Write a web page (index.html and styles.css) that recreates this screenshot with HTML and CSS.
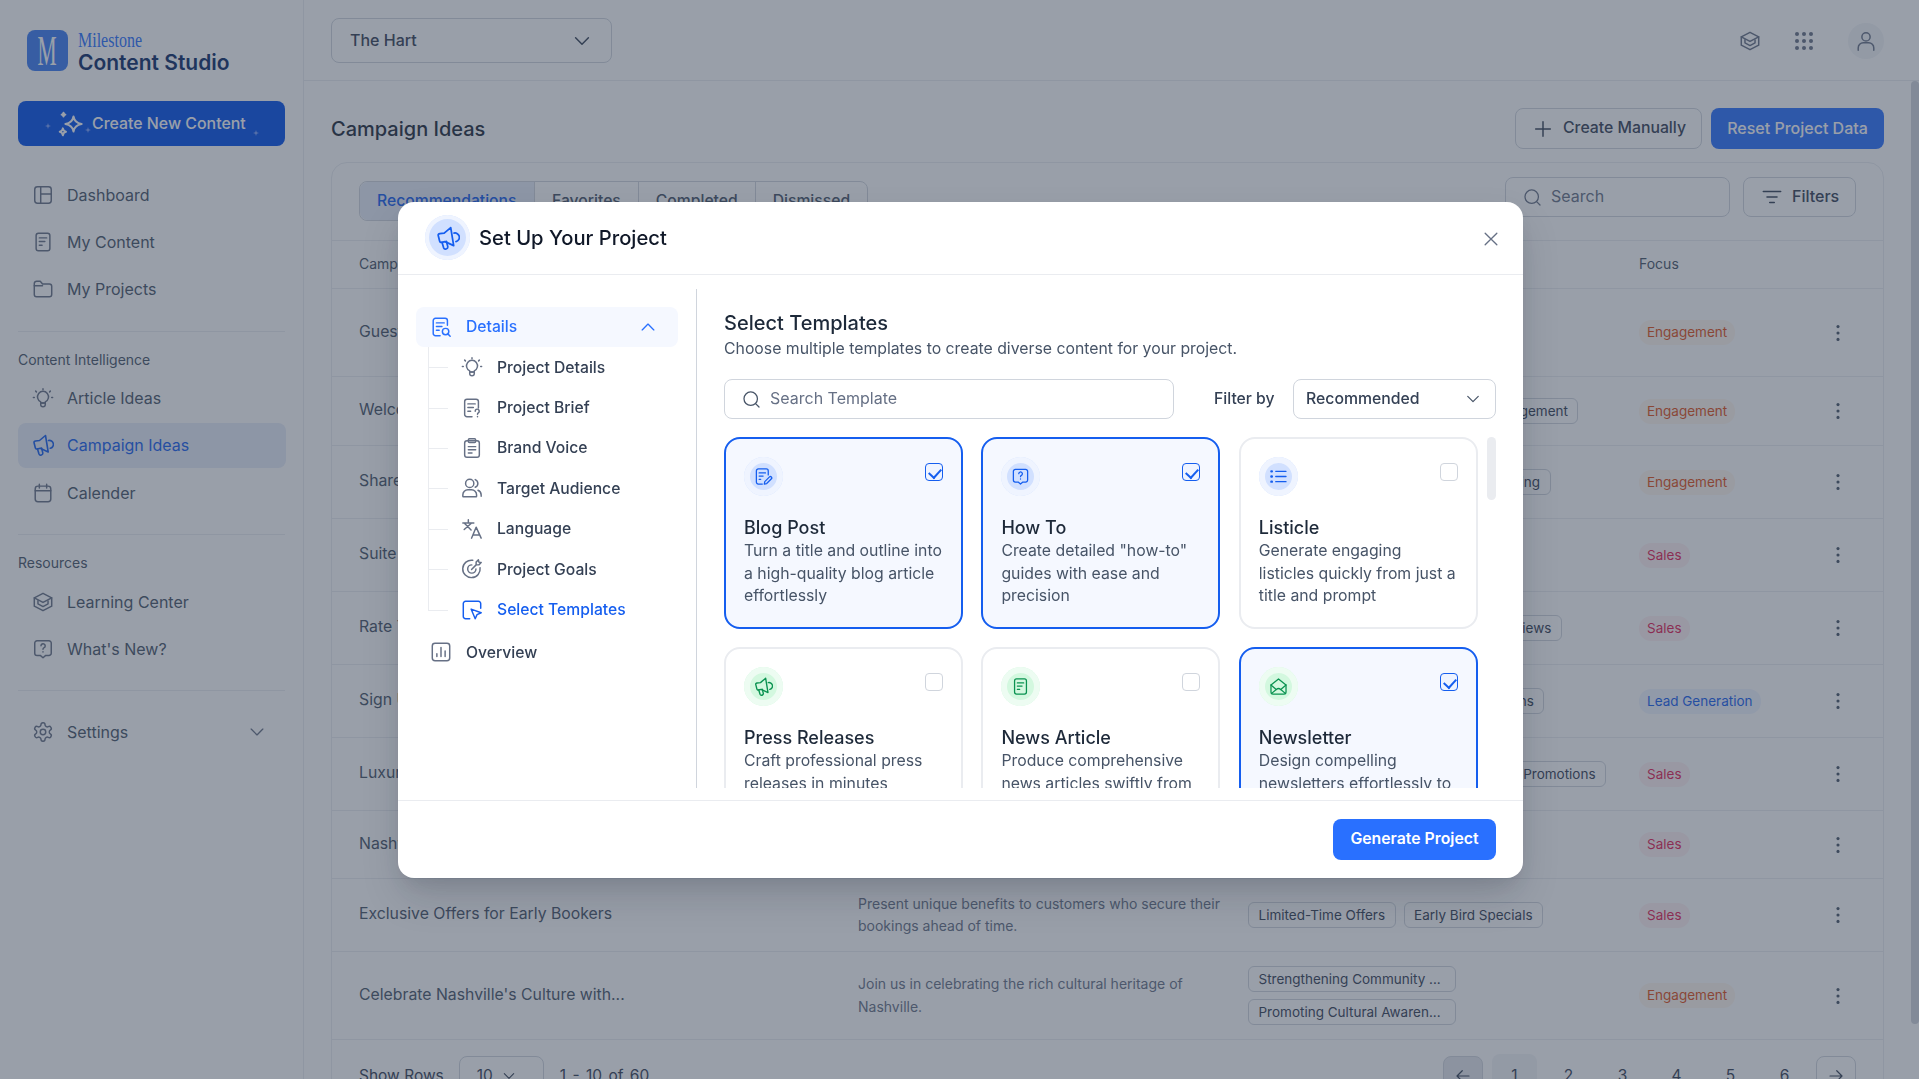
FILE: index.html
```html
<!DOCTYPE html>
<html lang="en">
<head>
    <meta charset="UTF-8">
    <title>Campaign Ideas</title>
    <link rel="stylesheet" href="styles.css">
</head>
<body>
    <svg class="sprite" xmlns="http://www.w3.org/2000/svg">
        <symbol id="i-dash" viewBox="0 0 24 24"><rect x="3" y="3" width="18" height="18" rx="3"/><path d="M9.5 3v18M9.5 11H21"/></symbol>
        <symbol id="i-doc" viewBox="0 0 24 24"><rect x="4.5" y="2.5" width="15" height="19" rx="2.5"/><path d="M8 7.5h8M8 11.5h6M8 15.5h3"/></symbol>
        <symbol id="i-folder" viewBox="0 0 24 24"><path d="M2.5 6A2.5 2.5 0 0 1 5 3.5h4l2.5 3H19A2.5 2.5 0 0 1 21.5 9v9a2.5 2.5 0 0 1-2.5 2.5H5A2.5 2.5 0 0 1 2.5 18Z"/><path d="M2.5 8.500h9"/></symbol>
        <symbol id="i-bulb" viewBox="0 0 24 24"><path d="M9.5 17.5v-1.300A6 6 0 1 1 14.5 16.200v1.300Z"/><path d="M9.5 17.5h5V19a2.5 2.5 0 0 1-5 0Z"/><path d="M12 2v1M4 4.500l.8.8M20 4.500l-.8.8M1.500 11.500h1M21.500 11.500h1"/></symbol>
        <symbol id="i-mega" viewBox="1 1 21 22"><path d="M2.500 9.500 3.800 14.800c.2.900 1 1.400 1.900 1.200l3-.7 8 3.700L14 2.500 8 7.500 4 8c-1 .2-1.700.8-1.500 1.500Z"/><path d="m6 16 1.500 5a2 2 0 0 0 3.800-1.100L10 15"/><path d="M17 7.500a4 4 0 0 1 1.800 7.800"/></symbol>
        <symbol id="i-cal" viewBox="0 0 24 24"><rect x="3.500" y="4.500" width="17" height="17" rx="3"/><path d="M3.500 9.500h17M8 2.500v4M16 2.500v4"/></symbol>
        <symbol id="i-hat" viewBox="0 0 24 24"><path d="M12 2.500 21.500 7.500v9L12 21.500 2.500 16.500v-9Z"/><path d="M2.500 7.500 12 12.500l9.500-5"/><path d="M6.500 10.500v3.500l5.500 3 5.500-3v-3"/></symbol>
        <symbol id="i-help" viewBox="0 0 24 24"><path d="M5.500 3h13A2.500 2.500 0 0 1 21 5.500v11a2.500 2.500 0 0 1-2.500 2.500H15l-3 2.500L9 19H5.500A2.500 2.500 0 0 1 3 16.500v-11A2.500 2.500 0 0 1 5.500 3Z"/><path d="M9.800 8.500a2.300 2.300 0 1 1 3.400 2.100c-.8.400-1.200.9-1.200 1.700M12 15v.2"/></symbol>
        <symbol id="i-gear" viewBox="0 0 24 24"><path d="M12.220 2h-.44a2 2 0 0 0-2 2v.18a2 2 0 0 1-1 1.730l-.43.25a2 2 0 0 1-2 0l-.15-.08a2 2 0 0 0-2.730.73l-.22.38a2 2 0 0 0 .73 2.730l.15.1a2 2 0 0 1 1 1.720v.51a2 2 0 0 1-1 1.740l-.15.09a2 2 0 0 0-.73 2.730l.22.38a2 2 0 0 0 2.730.73l.15-.08a2 2 0 0 1 2 0l.43.25a2 2 0 0 1 1 1.730V20a2 2 0 0 0 2 2h.44a2 2 0 0 0 2-2v-.18a2 2 0 0 1 1-1.730l.43-.25a2 2 0 0 1 2 0l.15.08a2 2 0 0 0 2.730-.73l.22-.39a2 2 0 0 0-.73-2.730l-.15-.08a2 2 0 0 1-1-1.740v-.5a2 2 0 0 1 1-1.740l.15-.09a2 2 0 0 0 .73-2.730l-.22-.38a2 2 0 0 0-2.730-.73l-.15.08a2 2 0 0 1-2 0l-.43-.25a2 2 0 0 1-1-1.730V4a2 2 0 0 0-2-2z"/><circle cx="12" cy="12" r="3"/></symbol>
        <symbol id="i-chev" viewBox="0 0 24 24"><path d="m5 8.500 7 7 7-7"/></symbol>
        <symbol id="i-search" viewBox="0 0 24 24"><circle cx="11" cy="11" r="8.500"/><path d="m17.500 17.500 4 4"/></symbol>
        <symbol id="i-filter" viewBox="0 0 24 24"><path d="M2.500 6h19M6.500 12h11M9.500 18h5"/></symbol>
        <symbol id="i-plus" viewBox="0 0 24 24"><path d="M12 4v16M4 12h16"/></symbol>
        <symbol id="i-x" viewBox="0 0 24 24"><path d="M5 5l14 14M19 5 5 19"/></symbol>
        <symbol id="i-user" viewBox="0 0 24 24"><circle cx="12" cy="7.500" r="4.500"/><path d="M3.500 22v-2.500A5.500 5.500 0 0 1 9 14h6a5.500 5.500 0 0 1 5.500 5.500V22"/></symbol>
        <symbol id="i-more" viewBox="0 0 24 24"><circle cx="12" cy="5" r="1.700"/><circle cx="12" cy="12" r="1.700"/><circle cx="12" cy="19" r="1.700"/></symbol>
        <symbol id="i-left" viewBox="0 0 24 24"><path d="M20 12H4M11 5l-7 7 7 7"/></symbol>
        <symbol id="i-right" viewBox="0 0 24 24"><path d="M4 12h16M13 5l7 7-7 7"/></symbol>
        <symbol id="i-spark" viewBox="0 0 24 24"><path d="M14 6c.6 3.500 2.500 5.400 6.500 6-4 .6-5.900 2.500-6.500 6-.6-3.500-2.500-5.400-6.500-6 4-.6 5.900-2.500 6.500-6Z"/><path d="M5.500 15.500c.3 1.700 1 2.400 2.500 2.700-1.500.3-2.200 1-2.500 2.800-.3-1.800-1-2.500-2.500-2.800 1.500-.3 2.200-1 2.500-2.700ZM6 3c.2 1 .6 1.400 1.500 1.500C6.600 4.700 6.200 5.100 6 6c-.2-.9-.6-1.300-1.500-1.500C5.400 4.400 5.800 4 6 3Z"/></symbol>
        <symbol id="i-docsearch" viewBox="0 0 24 24"><path d="M19 10V5a2.500 2.500 0 0 0-2.500-2.500H6A2.500 2.500 0 0 0 3.500 5v14A2.500 2.500 0 0 0 6 21.500h5"/><path d="M7 7.500h8.500M7 11.500h6M7 15.500h3"/><circle cx="17" cy="17" r="3.500"/><path d="m19.500 19.500 2.500 2.500"/></symbol>
        <symbol id="i-docask" viewBox="0 0 24 24"><path d="M12 21.500H6.500A2.500 2.500 0 0 1 4 19V5a2.500 2.500 0 0 1 2.500-2.500h10A2.500 2.500 0 0 1 19 5v7"/><path d="M7.500 7.500h8M7.500 11.500h6M7.500 15.500h3"/><path d="M15.500 15.500a2.200 2.200 0 1 1 3.400 1.800c-.6.400-.9.800-.9 1.400M18 21.300v.2"/></symbol>
        <symbol id="i-clip" viewBox="0 0 24 24"><rect x="4" y="4" width="16" height="18" rx="2.500"/><rect x="8" y="2" width="8" height="4" rx="1.200"/><path d="M8 10.500h8M8 14h8M8 17.500h4"/></symbol>
        <symbol id="i-users" viewBox="0 0 24 24"><circle cx="9.500" cy="7" r="4.500"/><path d="M2 21v-1.500A5.500 5.500 0 0 1 7.500 14h4a5.500 5.500 0 0 1 5.500 5.500V21a.5.500 0 0 1-.5.5h-14A.5.500 0 0 1 2 21Z"/><path d="M15.500 2.800a4.500 4.500 0 0 1 0 8.400M18.500 14.500A5.500 5.500 0 0 1 22 19.500V21"/></symbol>
        <symbol id="i-lang" viewBox="0 0 24 24"><path d="M2 5.500h12M8 2v3.500M3.500 12.500 11 6M4 6l7 7"/><path d="M11.500 22 16.500 10l5.500 12M13 18.500h7.500"/></symbol>
        <symbol id="i-goal" viewBox="0 0 24 24"><path d="M20.800 10.500a9.500 9.500 0 1 1-8-8"/><path d="M16.300 12a4.500 4.500 0 1 1-4.500-4.500"/><path d="m11.500 12.500 5-5M16.500 7.500V4.500L19 2l.5 2.500L22 5l-2.500 2.500Z"/></symbol>
        <symbol id="i-pick" viewBox="0 0 24 24"><path d="M9.500 21.500H5A2.500 2.500 0 0 1 2.500 19V5A2.500 2.500 0 0 1 5 2.500h14A2.500 2.500 0 0 1 21.500 5v5"/><path d="M11 11l11 4-4.500 2-2 4.500Z"/></symbol>
        <symbol id="i-chart" viewBox="0 0 24 24"><rect x="2.500" y="2.500" width="19" height="19" rx="3"/><path d="M7.500 17v-3M12 17V7M16.500 17v-6"/></symbol>
        <symbol id="i-docedit" viewBox="0 0 24 24"><path d="M10.500 21.500h-5A2.500 2.500 0 0 1 3 19V5a2.500 2.500 0 0 1 2.500-2.500h10A2.500 2.500 0 0 1 18 5v5"/><path d="M6.500 7.500h8M6.500 11.500h5M6.500 15.500h2"/><path d="m13 21.500.6-3 6-6a1.700 1.700 0 0 1 2.400 2.400l-6 6Z"/></symbol>
        <symbol id="i-list" viewBox="0 0 24 24"><path d="M8.500 5.500h13M8.500 12h13M8.500 18.500h13"/><path class="thick" d="M3 5.500h.6M3 12h.6M3 18.500h.6"/></symbol>
        <symbol id="i-mail" viewBox="0 0 24 24"><path d="M2.500 10v9A2.500 2.500 0 0 0 5 21.500h14a2.500 2.500 0 0 0 2.500-2.500v-9L12 2.500Z"/><path d="m2.500 10 7 6M21.500 10l-7 6M3 21l6.500-5.500a4 4 0 0 1 5 0L21 21"/></symbol>
    </svg>

    <div class="app">
        <aside class="sidebar">
            <div class="brand">
                <div class="brand-mark"><span>M</span></div>
                <div class="brand-text">
                    <div class="brand-top">Milestone</div>
                    <div class="brand-name">Content Studio</div>
                </div>
            </div>
            <div class="create-btn">
                <i class="spark-dot spark-a"></i><i class="spark-dot spark-b"></i><i class="spark-dot spark-c"></i>
                <svg class="icon spark-icon"><use href="#i-spark"/></svg>
                <span>Create New Content</span>
            </div>
            <nav class="nav-group first">
                <a class="nav-item"><svg class="icon"><use href="#i-dash"/></svg>Dashboard</a>
                <a class="nav-item"><svg class="icon"><use href="#i-doc"/></svg>My Content</a>
                <a class="nav-item"><svg class="icon"><use href="#i-folder"/></svg>My Projects</a>
            </nav>
            <div class="side-rule"></div>
            <div class="nav-label">Content Intelligence</div>
            <nav class="nav-group">
                <a class="nav-item"><svg class="icon"><use href="#i-bulb"/></svg>Article Ideas</a>
                <a class="nav-item active"><svg class="icon"><use href="#i-mega"/></svg>Campaign Ideas</a>
                <a class="nav-item"><svg class="icon"><use href="#i-cal"/></svg>Calender</a>
            </nav>
            <div class="side-rule"></div>
            <div class="nav-label">Resources</div>
            <nav class="nav-group">
                <a class="nav-item"><svg class="icon"><use href="#i-hat"/></svg>Learning Center</a>
                <a class="nav-item"><svg class="icon"><use href="#i-help"/></svg>What's New?</a>
            </nav>
            <div class="side-rule"></div>
            <nav class="nav-group settings">
                <a class="nav-item"><svg class="icon"><use href="#i-gear"/></svg>Settings<svg class="icon chev"><use href="#i-chev"/></svg></a>
            </nav>
        </aside>

        <div class="main">
            <header class="topbar">
                <div class="project-select"><span>The Hart</span><svg class="icon"><use href="#i-chev"/></svg></div>
                <div class="top-icons">
                    <svg class="icon"><use href="#i-hat"/></svg>
                    <div class="apps"><i></i><i></i><i></i><i></i><i></i><i></i><i></i><i></i><i></i></div>
                    <div class="avatar"><svg class="icon"><use href="#i-user"/></svg></div>
                </div>
            </header>
            <div class="page-wrap">
                <div class="page">
                    <div class="page-head">
                        <h1>Campaign Ideas</h1>
                        <div class="btn outline"><svg class="icon"><use href="#i-plus"/></svg><span>Create Manually</span></div>
                        <div class="btn solid"><span>Reset Project Data</span></div>
                    </div>
                    <div class="panel">
                        <div class="panel-bar">
                            <div class="tabs">
                                <div class="tab current">Recommendations</div>
                                <div class="tab">Favorites</div>
                                <div class="tab">Completed</div>
                                <div class="tab">Dismissed</div>
                            </div>
                            <div class="panel-search"><svg class="icon"><use href="#i-search"/></svg><span>Search</span></div>
                            <div class="panel-filter"><svg class="icon"><use href="#i-filter"/></svg><span>Filters</span></div>
                        </div>
                        <div class="trow thead h48">
                            <div>Campaign</div><div>Description</div><div>Tags</div><div>Focus</div><div></div>
                        </div>
                        <div class="trow h88">
                            <div class="t-name">Guest Appreciation Week</div>
                            <div class="t-desc"></div>
                            <div class="t-tags"><span class="tag">Guest Loyalty</span></div>
                            <div><span class="pill orange">Engagement</span></div>
                            <svg class="icon more"><use href="#i-more"/></svg>
                        </div>
                        <div class="trow h69">
                            <div class="t-name">Welcome Back Offer</div>
                            <div class="t-desc"></div>
                            <div class="t-tags"><span class="tag">Personalized Service</span><span class="tag">Customer Engagement</span></div>
                            <div><span class="pill orange">Engagement</span></div>
                            <svg class="icon more"><use href="#i-more"/></svg>
                        </div>
                        <div class="trow h73">
                            <div class="t-name">Share Your Story</div>
                            <div class="t-desc"></div>
                            <div class="t-tags"><span class="tag">User Created Content</span><span class="tag">Guest Storytelling</span></div>
                            <div><span class="pill orange">Engagement</span></div>
                            <svg class="icon more"><use href="#i-more"/></svg>
                        </div>
                        <div class="trow h73">
                            <div class="t-name">Suite Upgrade Offers</div>
                            <div class="t-desc"></div>
                            <div class="t-tags"><span class="tag">Room Upgrades</span></div>
                            <div><span class="pill rose">Sales</span></div>
                            <svg class="icon more"><use href="#i-more"/></svg>
                        </div>
                        <div class="trow h73">
                            <div class="t-name">Rate Your Stay</div>
                            <div class="t-desc"></div>
                            <div class="t-tags"><span class="tag">Guest Satisfaction</span><span class="tag">Positive Guest Reviews</span></div>
                            <div><span class="pill rose">Sales</span></div>
                            <svg class="icon more"><use href="#i-more"/></svg>
                        </div>
                        <div class="trow h73">
                            <div class="t-name">Sign Up and Save</div>
                            <div class="t-desc"></div>
                            <div class="t-tags"><span class="tag">Exclusive Members</span><span class="tag">Loyalty Promotions</span></div>
                            <div><span class="pill blue">Lead Generation</span></div>
                            <svg class="icon more"><use href="#i-more"/></svg>
                        </div>
                        <div class="trow h73">
                            <div class="t-name">Luxury Weekend Getaways</div>
                            <div class="t-desc"></div>
                            <div class="t-tags"><span class="tag">Luxury Experiences</span><span class="tag">Special Package Promotions</span></div>
                            <div><span class="pill rose">Sales</span></div>
                            <svg class="icon more"><use href="#i-more"/></svg>
                        </div>
                        <div class="trow h68">
                            <div class="t-name">Nashville Nights</div>
                            <div class="t-desc"></div>
                            <div class="t-tags"><span class="tag">Local Events</span></div>
                            <div><span class="pill rose">Sales</span></div>
                            <svg class="icon more"><use href="#i-more"/></svg>
                        </div>
                        <div class="trow h73">
                            <div class="t-name">Exclusive Offers for Early Bookers</div>
                            <div class="t-desc">Present unique benefits to customers who secure their bookings ahead of time.</div>
                            <div class="t-tags"><span class="tag">Limited-Time Offers</span><span class="tag">Early Bird Specials</span></div>
                            <div><span class="pill rose">Sales</span></div>
                            <svg class="icon more"><use href="#i-more"/></svg>
                        </div>
                        <div class="trow h88">
                            <div class="t-name">Celebrate Nashville's Culture with...</div>
                            <div class="t-desc">Join us in celebrating the rich cultural heritage of Nashville.</div>
                            <div class="t-tags stack"><span class="tag">Strengthening Community ...</span><span class="tag">Promoting Cultural Awaren...</span></div>
                            <div><span class="pill orange">Engagement</span></div>
                            <svg class="icon more"><use href="#i-more"/></svg>
                        </div>
                        <div class="pager">
                            <span>Show Rows</span>
                            <div class="rows-select">10<svg class="icon"><use href="#i-chev"/></svg></div>
                            <span class="pager-count">1 - 10 of 60</span>
                            <div class="pages">
                                <div class="page-arrow off"><svg class="icon"><use href="#i-left"/></svg></div>
                                <div class="page-num on">1</div>
                                <div class="page-num">2</div>
                                <div class="page-num">3</div>
                                <div class="page-num">4</div>
                                <div class="page-num">5</div>
                                <div class="page-num">6</div>
                                <div class="page-arrow"><svg class="icon"><use href="#i-right"/></svg></div>
                            </div>
                        </div>
                    </div>
                </div>
                <div class="page-scroll"></div>
            </div>
        </div>
    </div>

    <div class="overlay">
        <div class="modal">
            <div class="modal-head">
                <div class="halo blue big"><svg class="icon"><use href="#i-mega"/></svg></div>
                <h2>Set Up Your Project</h2>
                <svg class="icon close"><use href="#i-x"/></svg>
            </div>
            <div class="modal-body">
                <div class="steps">
                    <div class="step-head"><svg class="icon"><use href="#i-docsearch"/></svg>Details<svg class="icon up"><use href="#i-chev"/></svg></div>
                    <div class="tree">
                        <div class="leaf"><svg class="icon"><use href="#i-bulb"/></svg>Project Details</div>
                        <div class="leaf"><svg class="icon"><use href="#i-docask"/></svg>Project Brief</div>
                        <div class="leaf"><svg class="icon"><use href="#i-clip"/></svg>Brand Voice</div>
                        <div class="leaf"><svg class="icon"><use href="#i-users"/></svg>Target Audience</div>
                        <div class="leaf"><svg class="icon"><use href="#i-lang"/></svg>Language</div>
                        <div class="leaf"><svg class="icon"><use href="#i-goal"/></svg>Project Goals</div>
                        <div class="leaf now"><svg class="icon"><use href="#i-pick"/></svg>Select Templates</div>
                    </div>
                    <div class="step-last"><svg class="icon"><use href="#i-chart"/></svg>Overview</div>
                </div>
                <div class="picker">
                    <h3>Select Templates</h3>
                    <p>Choose multiple templates to create diverse content for your project.</p>
                    <div class="picker-tools">
                        <div class="tpl-search"><svg class="icon"><use href="#i-search"/></svg><span>Search Template</span></div>
                        <span class="filter-label">Filter by</span>
                        <div class="tpl-filter"><span>Recommended</span><svg class="icon"><use href="#i-chev"/></svg></div>
                    </div>
                    <div class="tpl-scroll">
                        <div class="tpl-grid">
                            <div class="tpl on">
                                <div class="tpl-top"><div class="halo blue"><svg class="icon"><use href="#i-docedit"/></svg></div><span class="check"></span></div>
                                <h4>Blog Post</h4>
                                <p>Turn a title and outline into a high-quality blog article effortlessly</p>
                            </div>
                            <div class="tpl on">
                                <div class="tpl-top"><div class="halo blue"><svg class="icon"><use href="#i-help"/></svg></div><span class="check"></span></div>
                                <h4>How To</h4>
                                <p>Create detailed "how-to" guides with ease and precision</p>
                            </div>
                            <div class="tpl">
                                <div class="tpl-top"><div class="halo blue"><svg class="icon"><use href="#i-list"/></svg></div><span class="check"></span></div>
                                <h4>Listicle</h4>
                                <p>Generate engaging listicles quickly from just a title and prompt</p>
                            </div>
                            <div class="tpl">
                                <div class="tpl-top"><div class="halo green"><svg class="icon"><use href="#i-mega"/></svg></div><span class="check"></span></div>
                                <h4>Press Releases</h4>
                                <p>Craft professional press releases in minutes</p>
                            </div>
                            <div class="tpl">
                                <div class="tpl-top"><div class="halo green"><svg class="icon"><use href="#i-doc"/></svg></div><span class="check"></span></div>
                                <h4>News Article</h4>
                                <p>Produce comprehensive news articles swiftly from any topic</p>
                            </div>
                            <div class="tpl on">
                                <div class="tpl-top"><div class="halo green"><svg class="icon"><use href="#i-mail"/></svg></div><span class="check"></span></div>
                                <h4>Newsletter</h4>
                                <p>Design compelling newsletters effortlessly to keep guests informed</p>
                            </div>
                        </div>
                        <div class="tpl-thumb"></div>
                    </div>
                </div>
            </div>
            <div class="modal-foot">
                <div class="generate">Generate Project</div>
            </div>
        </div>
    </div>
</body>
</html>
```

FILE: styles.css
```css
* {
    box-sizing: border-box;
}

html, body {
    margin: 0;
    height: 100%;
    overflow: hidden;
}

body {
    font-family: Inter, "Noto Sans", sans-serif;
    font-size: 16px;
    color: #344054;
    background: #fff;
}

.sprite {
    display: none;
}

.icon {
    width: 22px;
    height: 22px;
    flex: none;
    fill: none;
    stroke: currentColor;
    stroke-width: 1.6;
    stroke-linecap: round;
    stroke-linejoin: round;
}

.thick {
    stroke-width: 3;
}

.app {
    display: flex;
    height: 1079px;
}

/* sidebar */
.sidebar {
    width: 304px;
    flex: none;
    padding: 30px 17px 0 18px;
    border-right: 1px solid #eaecf0;
    color: #475467;
}

.brand {
    display: flex;
    align-items: flex-start;
    gap: 10px;
    margin-left: 9px;
    height: 41px;
}

.brand-mark {
    width: 41px;
    height: 41px;
    border-radius: 8px;
    background: #3a7bf2;
    display: flex;
    align-items: center;
    justify-content: center;
    color: #fff;
    font: 43px/41px "Liberation Serif", serif;
}

.brand-mark span {
    transform: scaleX(.5);
}

.brand-top {
    font: 20px/19px "Liberation Serif", serif;
    color: #2970ff;
    transform: scaleX(.8);
    transform-origin: left;
    height: 19px;
    margin-top: 1px;
}

.brand-name {
    font-size: 21px;
    line-height: 25px;
    font-weight: 600;
    color: #0a2a66;
    white-space: nowrap;
}

.create-btn {
    position: relative;
    display: flex;
    align-items: center;
    height: 45px;
    width: 267px;
    margin-top: 30px;
    padding-left: 38px;
    gap: 6px;
    border-radius: 8px;
    background: #004eeb;
    color: #fff;
    font-weight: 500;
    font-size: 15.9px;
}

.spark-icon {
    width: 30px;
    height: 30px;
}

.spark-dot {
    position: absolute;
    width: 6px;
    height: 6px;
    background: #7ea4ff;
    clip-path: polygon(50% 0, 62% 38%, 100% 50%, 62% 62%, 50% 100%, 38% 62%, 0 50%, 38% 38%);
}

.spark-a { left: 27px; top: 22px; }
.spark-b { left: 67px; top: 26px; }
.spark-c { left: 235px; top: 29px; }

.nav-group {
    display: flex;
    flex-direction: column;
    gap: 2.3px;
    margin-top: 6px;
}

.nav-group.first {
    margin-top: 26px;
}

.nav-group.settings {
    margin-top: 18px;
}

.nav-item {
    display: flex;
    align-items: center;
    gap: 13px;
    height: 45px;
    padding-left: 14px;
    border-radius: 8px;
    font-size: 16px;
}

.nav-item .icon {
    stroke: #667085;
}

.nav-item.active {
    background: #e6ecf8;
    color: #155eef;
}

.nav-item.active .icon {
    stroke: #155eef;
}

.nav-item .chev {
    margin-left: auto;
    margin-right: 19px;
    width: 20px;
    height: 20px;
}

.side-rule {
    height: 1px;
    width: 267px;
    margin-top: 19px;
    background: #eaecf0;
}

.nav-label {
    margin-top: 18px;
    font-size: 14px;
    line-height: 20px;
}

/* main area */
.main {
    flex: 1;
    min-width: 0;
    display: flex;
    flex-direction: column;
}

.topbar {
    height: 81px;
    flex: none;
    display: flex;
    align-items: flex-start;
    justify-content: space-between;
    padding: 18px 35px 0 27px;
    border-bottom: 1px solid #eaecf0;
}

.project-select {
    width: 281px;
    height: 45px;
    display: flex;
    align-items: center;
    justify-content: space-between;
    padding: 0 18px;
    border: 1px solid #d0d5dd;
    border-radius: 8px;
    font-weight: 500;
}

.project-select span,
.btn span,
.panel-search span,
.panel-filter span,
.tpl-search span,
.tpl-filter span,
.filter-label {
    margin-top: -2px;
}

.top-icons {
    display: flex;
    align-items: center;
    gap: 34px;
    margin-top: 5px;
    color: #667085;
}

.apps {
    display: grid;
    grid-template-columns: repeat(3, 4px);
    gap: 3px;
    margin-right: 1px;
}

.apps i {
    width: 4px;
    height: 4px;
    border-radius: 50%;
    background: #667085;
}

.avatar {
    width: 36px;
    height: 36px;
    border-radius: 50%;
    background: #f2f4f7;
    display: flex;
    align-items: center;
    justify-content: center;
}

.page-wrap {
    flex: 1;
    display: flex;
    min-height: 0;
}

.page {
    flex: 1;
    padding: 27px 27px 0 27px;
}

.page-scroll {
    width: 8px;
    height: 943px;
    border-radius: 4px;
    background: #d0d5dd;
}

.page-head {
    display: flex;
    align-items: center;
    gap: 9px;
    height: 41px;
    margin-bottom: 13px;
}

.page-head h1 {
    flex: 1;
    margin: 0;
    font-size: 20px;
    font-weight: 500;
    color: #1d2939;
}

.btn {
    height: 41px;
    display: flex;
    align-items: center;
    border-radius: 8px;
    font-weight: 500;
    font-size: 16px;
}

.btn.outline {
    width: 187px;
    gap: 9px;
    padding-left: 16px;
    border: 1px solid #d0d5dd;
    font-size: 15.8px;
}

.btn.solid {
    width: 173px;
    justify-content: center;
    background: #2970ff;
    color: #fff;
}

.panel {
    border: 1px solid #eaecf0;
    border-radius: 16px 16px 0 0;
    height: 940px;
    overflow: hidden;
}

.panel-bar {
    display: flex;
    align-items: flex-start;
    height: 77px;
    padding: 14px 27px 0;
}

.tabs {
    display: flex;
    height: 40px;
    margin-top: 4px;
    margin-right: auto;
    border: 1px solid #d0d5dd;
    border-radius: 8px;
    font-size: 15.7px;
    font-weight: 500;
    color: #475467;
}

.tab {
    padding: 0 17px;
    line-height: 38px;
    border-left: 1px solid #d0d5dd;
}

.tab:first-child {
    border-left: 0;
}

.tab.current {
    width: 174px;
    background: #e6ecf8;
    color: #155eef;
    border-radius: 8px 0 0 8px;
}

.panel-search {
    width: 225px;
    height: 40px;
    display: flex;
    align-items: center;
    gap: 9px;
    padding-left: 17px;
    border: 1px solid #d0d5dd;
    border-radius: 8px;
    color: #667085;
}

.panel-search .icon {
    width: 19px;
    height: 19px;
}

.panel-filter {
    width: 113px;
    height: 40px;
    display: flex;
    align-items: center;
    gap: 9px;
    margin-left: 13px;
    padding-left: 17px;
    border: 1px solid #d0d5dd;
    border-radius: 8px;
    font-weight: 500;
}

.trow {
    display: grid;
    grid-template-columns: 499px 390px 391px 188px 1fr;
    align-items: center;
    padding-left: 27px;
    border-top: 1px solid #eaecf0;
    color: #475467;
}

.thead {
    font-size: 14px;
    padding-bottom: 2px;
}

.h48 { height: 48px; }
.h88 { height: 88px; }
.h69 { height: 69px; }
.h73 { height: 73px; }
.h68 { height: 68px; }

.t-name {
    font-size: 15.8px;
    padding-bottom: 3px;
}

.t-desc {
    font-size: 14px;
    line-height: 22.5px;
    color: #667085;
    padding-right: 20px;
}

.t-tags {
    display: flex;
    gap: 8px;
}

.t-tags.stack {
    flex-direction: column;
    align-items: flex-start;
    gap: 7px;
}

.t-tags.stack .tag {
    width: 208px;
}

.tag {
    height: 26px;
    line-height: 24px;
    padding: 0 9.5px;
    white-space: nowrap;
    border: 1px solid #d0d5dd;
    border-radius: 6px;
    font-size: 13.5px;
    color: #344054;
}

.pill {
    display: inline-block;
    height: 25px;
    line-height: 25px;
    padding: 0 8px;
    border-radius: 12px;
    font-size: 13.5px;
}

.pill.orange { background: #fef6ee; color: #e04f16; }
.pill.rose { background: #fff1f3; color: #e31b54; }
.pill.blue { background: #eff4ff; color: #155eef; }

.more {
    justify-self: start;
    fill: #475467;
    stroke: none;
}

.pager {
    display: flex;
    align-items: center;
    height: 73px;
    padding: 0 27px 1px;
    border-top: 1px solid #eaecf0;
    font-size: 15.5px;
}

.rows-select {
    width: 85px;
    height: 40px;
    display: flex;
    align-items: center;
    gap: 8px;
    margin-left: 15px;
    padding-left: 17px;
    border: 1px solid #d0d5dd;
    border-radius: 8px;
}

.rows-select .icon {
    width: 16px;
    height: 16px;
}

.pager-count {
    margin-left: 16px;
    word-spacing: 2px;
}

.pages {
    display: flex;
    align-items: center;
    margin-left: auto;
}

.page-arrow {
    width: 40px;
    height: 40px;
    display: flex;
    align-items: center;
    justify-content: center;
    border: 1px solid #d0d5dd;
    border-radius: 8px;
}

.page-arrow.off {
    background: #e4e7ec;
    margin-right: 9px;
}

.page-arrow .icon {
    width: 18px;
    height: 18px;
}

.page-num {
    width: 45px;
    margin-right: 9px;
    height: 44px;
    line-height: 44px;
    text-align: center;
    border-radius: 8px;
}

.page-num.on {
    background: #f2f4f7;
}

/* modal */
.overlay {
    position: fixed;
    inset: 0;
    background: rgba(52, 64, 84, .5);
    padding: 202px 0 0 2px;
    display: flex;
    justify-content: center;
    align-items: flex-start;
}

.modal {
    width: 1125px;
    height: 676px;
    display: flex;
    flex-direction: column;
    background: #fff;
    border-radius: 16px;
    box-shadow: 0 20px 40px -4px rgba(16, 24, 40, .18), 0 8px 16px -4px rgba(16, 24, 40, .08);
}

.modal-head {
    height: 73px;
    flex: none;
    display: flex;
    align-items: center;
    padding: 0 22px 1px 27px;
    border-bottom: 1px solid #eaecf0;
}

.modal-head h2 {
    flex: 1;
    margin: 0 0 0 9px;
    font-size: 20.2px;
    font-weight: 500;
    color: #101828;
}

.close {
    color: #667085;
    width: 20px;
    height: 20px;
    margin-top: 2px;
}

.halo {
    width: 39px;
    height: 39px;
    flex: none;
    border-radius: 50%;
    display: flex;
    align-items: center;
    justify-content: center;
}

.halo .icon {
    width: 19px;
    height: 19px;
}

.halo.blue {
    color: #155eef;
    background: #d1e0ff;
    box-shadow: inset 0 0 0 6px #eff4ff;
}

.halo.green {
    color: #099250;
    background: #d3f8df;
    box-shadow: inset 0 0 0 6px #edfcf2;
}

.halo.big {
    width: 45px;
    height: 45px;
    box-shadow: inset 0 0 0 4px #eff4ff;
}

.halo.big .icon {
    width: 24px;
    height: 24px;
}

.modal-body {
    flex: 1;
    min-height: 0;
    display: flex;
    padding: 14px 0 12px;
}

.steps {
    width: 299px;
    flex: none;
    padding: 18px 18px 0;
    border-right: 1px solid #d0d5dd;
    font-weight: 500;
    font-size: 15.7px;
    color: #344054;
}

.step-head {
    height: 40px;
    display: flex;
    align-items: center;
    gap: 14px;
    padding: 0 0 1px 14px;
    border-radius: 8px;
    background: #f5f8ff;
    color: #2970ff;
}

.step-head .up {
    margin-left: auto;
    margin-right: 20px;
    width: 20px;
    height: 20px;
    transform: rotate(180deg);
}

.tree {
    position: relative;
    margin-left: 12px;
    border-left: 1px solid #eaecf0;
    height: 264px;
}

.leaf {
    position: relative;
    height: 40.4px;
    display: flex;
    align-items: center;
    gap: 14px;
    padding-left: 32px;
    color: #344054;
}

.leaf::before {
    content: "";
    position: absolute;
    left: 0;
    top: 50%;
    width: 19px;
    height: 1px;
    background: #eaecf0;
}

.leaf .icon {
    stroke: #667085;
}

.leaf.now {
    color: #155eef;
}

.leaf.now .icon {
    stroke: #155eef;
}

.step-last {
    height: 40px;
    margin-top: 21px;
    display: flex;
    align-items: center;
    gap: 14px;
    padding-left: 14px;
}

.step-last .icon {
    stroke: #667085;
}

.picker {
    flex: 1;
    min-width: 0;
    padding: 20px 27px 0 27px;
    display: flex;
    flex-direction: column;
}

.picker h3 {
    margin: 0;
    font-size: 20px;
    line-height: 28px;
    font-weight: 500;
    color: #1d2939;
}

.picker > p {
    margin: 1px 0 -1px;
    line-height: 22px;
    font-size: 15.8px;
    color: #475467;
}

.picker-tools {
    display: flex;
    align-items: center;
    margin-top: 20px;
    flex: none;
}

.tpl-search {
    width: 450px;
    height: 40px;
    display: flex;
    align-items: center;
    gap: 9px;
    padding-left: 17px;
    border: 1px solid #d0d5dd;
    border-radius: 8px;
    color: #667085;
}

.tpl-search .icon {
    width: 19px;
    height: 19px;
    color: #475467;
}

.filter-label {
    margin-left: 40px;
    font-size: 15.7px;
    font-weight: 500;
    color: #344054;
    white-space: nowrap;
}

.tpl-filter {
    width: 203px;
    height: 40px;
    margin-left: auto;
    display: flex;
    align-items: center;
    justify-content: space-between;
    padding: 0 13px 0 12px;
    border: 1px solid #d0d5dd;
    border-radius: 8px;
    font-size: 15.8px;
    font-weight: 500;
}

.tpl-filter .icon {
    width: 18px;
    height: 18px;
    color: #475467;
}

.tpl-scroll {
    position: relative;
    flex: 1;
    min-height: 0;
    margin-top: 18px;
    overflow: hidden;
}

.tpl-grid {
    display: grid;
    grid-template-columns: repeat(3, 238.9px);
    column-gap: 18.5px;
    row-gap: 18px;
}

.tpl-thumb {
    position: absolute;
    right: 0;
    top: 0;
    width: 9px;
    height: 63px;
    border-radius: 5px;
    background: #eaecf0;
}

.tpl {
    height: 192px;
    padding: 18px 16px 0 18px;
    border: 2px solid #eaecf0;
    border-radius: 16px;
}

.tpl.on {
    border-color: #155eef;
    background: #f5f8ff;
}

.tpl-top {
    display: flex;
    justify-content: space-between;
    align-items: flex-start;
    height: 39px;
}

.check {
    width: 18px;
    height: 18px;
    margin-top: 6px;
    margin-right: 2px;
    border: 1px solid #d0d5dd;
    border-radius: 4px;
    background: #fff;
    position: relative;
}

.tpl.on .check {
    border-color: #155eef;
    background: #eff4ff;
}

.tpl.on .check::after {
    content: "";
    position: absolute;
    left: 5px;
    top: 1.5px;
    width: 6px;
    height: 10px;
    border: solid #155eef;
    border-width: 0 2px 2px 0;
    transform: rotate(42deg);
}

.tpl h4 {
    margin: 20px 0 0;
    font-size: 18px;
    line-height: 24px;
    font-weight: 500;
    color: #1d2939;
}

.tpl p {
    margin: 0;
    font-size: 15.8px;
    line-height: 22.5px;
    color: #475467;
}

.modal-foot {
    height: 78px;
    flex: none;
    display: flex;
    justify-content: flex-end;
    padding: 18px 27px 0 0;
    border-top: 1px solid #eaecf0;
}

.generate {
    width: 163px;
    height: 41px;
    line-height: 40px;
    text-align: center;
    border-radius: 8px;
    background: #2970ff;
    color: #fff;
    font-weight: 600;
    font-size: 15.8px;
}
```
